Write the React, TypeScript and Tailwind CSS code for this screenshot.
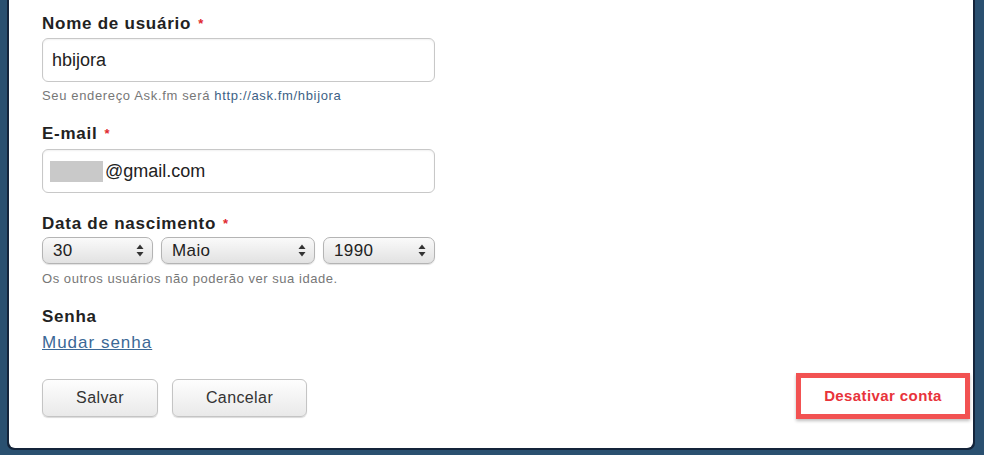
const font = { fontFamily: '"Liberation Sans", Arial, sans-serif' };

function Label({ children, required }: { children: string; required?: boolean }) {
  return (
    <div className="text-[17px] font-bold text-[#222] leading-[20px] tracking-[0.75px]">
      {children}
      {required && <span className="ml-[7px] text-[#e0282e] text-[13px] align-top">*</span>}
    </div>
  );
}

function SelectBox({ value, width }: { value: string; width: string }) {
  return (
    <div
      className={`${width} h-[27px] flex items-center justify-between pl-[10px] pr-2 rounded-[7px] border border-[#b4b4b4] bg-gradient-to-b from-[#fafafa] to-[#e2e2e2] shadow-[0_1px_1px_rgba(0,0,0,0.12)]`}
    >
      <span className="text-[17px] text-[#222] tracking-[0.4px]">{value}</span>
      <svg width="8" height="13" viewBox="0 0 8 13">
        <path d="M4 0.5 L7.5 5 L0.5 5 Z" fill="#333" />
        <path d="M4 12.5 L7.5 8 L0.5 8 Z" fill="#333" />
      </svg>
    </div>
  );
}

function Button({ children, width }: { children: string; width: string }) {
  return (
    <button
      className={`${width} h-[38px] rounded-[6px] border border-[#c4c4c4] bg-gradient-to-b from-[#fefefe] to-[#e9e9e9] text-[16px] tracking-[0.4px] text-[#333] shadow-[0_1px_1px_rgba(0,0,0,0.15)]`}
    >
      {children}
    </button>
  );
}

export default function App() {
  return (
    <div className="w-[984px] h-[455px] bg-[#2a5070] overflow-hidden" style={font}>
      <div className="ml-[7px] w-[968px] h-[450px] bg-[#14243a] pl-[2px] pr-[2px] pb-[2px] rounded-b-[7px]">
        <div className="h-full bg-white rounded-b-[6px] flex flex-col pl-[33px] pr-[3px] pt-[14px]">
          <Label required>Nome de usuário</Label>
          <div className="mt-[4px] w-[393px] h-[44px] rounded-[6px] border border-[#c8c8c8] flex items-center px-[9px] text-[18px] text-[#222] shadow-[inset_0_1px_2px_rgba(0,0,0,0.06)]">
            hbijora
          </div>
          <div className="mt-[6px] text-[13px] text-[#777] leading-[15px] tracking-[0.65px]">
            Seu endereço Ask.fm será <span className="text-[#3d5f85]">http://ask.fm/hbijora</span>
          </div>

          <div className="mt-[21px]">
            <Label required>E-mail</Label>
          </div>
          <div className="mt-[5px] w-[393px] h-[44px] rounded-[6px] border border-[#c8c8c8] flex items-center pl-[7px] text-[18px] text-[#222] shadow-[inset_0_1px_2px_rgba(0,0,0,0.06)]">
            <span className="w-[53px] h-[21px] bg-[#c9c9c9] mr-[2px]" />
            @gmail.com
          </div>

          <div className="mt-[21px]">
            <Label required>Data de nascimento</Label>
          </div>
          <div className="mt-[3px] flex gap-[8px]">
            <SelectBox value="30" width="w-[111px]" />
            <SelectBox value="Maio" width="w-[154px]" />
            <SelectBox value="1990" width="w-[112px]" />
          </div>
          <div className="mt-[7px] text-[13px] text-[#777] leading-[15px] tracking-[0.55px]">
            Os outros usuários não poderão ver sua idade.
          </div>

          <div className="mt-[21px]">
            <Label>Senha</Label>
          </div>
          <a className="mt-[5px] text-[17px] text-[#3b6896] underline w-fit leading-[22px] tracking-[1px]">
            Mudar senha
          </a>

          <div className="mt-[19px] flex items-center">
            <div className="flex gap-[14px]">
              <Button width="w-[116px]">Salvar</Button>
              <Button width="w-[135px]">Cancelar</Button>
            </div>
            <div className="ml-auto mb-[4px] w-[174px] h-[46px] border-[5px] border-[#f25252] bg-white flex items-center justify-center shadow-[0_2px_3px_rgba(0,0,0,0.25)]">
              <span className="text-[15px] font-bold text-[#e8333b] tracking-[0.4px]">Desativar conta</span>
            </div>
          </div>
        </div>
      </div>
    </div>
  );
}
